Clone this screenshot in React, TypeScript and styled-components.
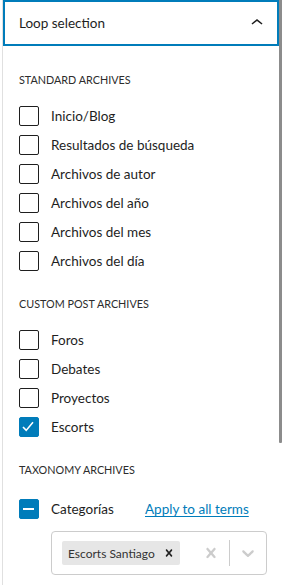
import React from "react";
import styled, { createGlobalStyle } from "styled-components";

const GlobalStyle = createGlobalStyle`
  html, body {
    margin: 0;
    padding: 0;
    background: #fff;
  }
  body {
    font-family: Lato, "Liberation Sans", sans-serif;
    color: #1e1e1e;
  }
`;

const Panel = styled.div`
  position: relative;
  margin-left: 2px;
  width: 277px;
  min-height: 585px;
  border-left: 1px solid #e0e0e0;
  box-sizing: border-box;
`;

const ScrollThumb = styled.div`
  position: absolute;
  top: 0;
  right: -3px;
  width: 3px;
  height: 443px;
  background: #8c8c8c;
  border-radius: 0 0 1px 1px;
`;

const Header = styled.button`
  display: flex;
  align-items: center;
  justify-content: space-between;
  width: 100%;
  height: 46px;
  padding: 0 10px 0 16px;
  box-sizing: border-box;
  background: #fff;
  border: none;
  box-shadow: inset 0 0 0 2px #007cba;
  font-family: inherit;
  font-size: 13.5px;
  color: #1e1e1e;
  cursor: pointer;
`;

const Body = styled.div`
  padding: 26px 16px 0 16px;
`;

const SectionTitle = styled.div<{ $gap?: number }>`
  font-size: 10.8px;
  line-height: 16px;
  text-transform: uppercase;
  color: #2c2c2c;
  margin-bottom: ${({ $gap }) => $gap ?? 18}px;
`;

const List = styled.div`
  display: flex;
  flex-direction: column;
  gap: 9px;
  margin-bottom: 25px;
`;

const Row = styled.label`
  display: flex;
  align-items: center;
  gap: 12px;
  height: 20px;
  font-size: 13.5px;
  cursor: pointer;
`;

const Box = styled.span<{ $on?: boolean }>`
  display: flex;
  align-items: center;
  justify-content: center;
  flex: none;
  width: 20px;
  height: 20px;
  box-sizing: border-box;
  border-radius: 2px;
  border: 1px solid ${({ $on }) => ($on ? "#007cba" : "#1e1e1e")};
  background: ${({ $on }) => ($on ? "#007cba" : "#fff")};
`;

const Label = styled.span<{ $width?: number }>`
  line-height: 20px;
  ${({ $width }) => ($width ? `width: ${$width}px;` : "")}
`;

const TermLink = styled.a`
  font-size: 13.5px;
  color: #007cba;
  text-decoration: underline;
  text-underline-offset: 2px;
`;

const Control = styled.div`
  display: flex;
  align-items: stretch;
  margin: 12px 0 0 32px;
  width: 216px;
  height: 44px;
  box-sizing: border-box;
  border: 1px solid #cccccc;
  border-radius: 4px;
  background: #fff;
`;

const ValueArea = styled.div`
  flex: 1;
  display: flex;
  align-items: center;
  padding: 0 0 0 10px;
`;

const Tag = styled.div`
  display: flex;
  align-items: center;
  height: 24px;
  background: #e6e6e6;
  border-radius: 2px;
`;

const TagText = styled.span`
  font-size: 12px;
  padding: 0 3px 0 6px;
  color: #333;
`;

const TagRemove = styled.span`
  display: flex;
  align-items: center;
  padding: 0 4px;
  height: 100%;
  color: #222;
`;

const Indicator = styled.span`
  display: flex;
  align-items: center;
  padding: 0 8px;
  color: #cccccc;
`;

const Separator = styled.span`
  width: 1px;
  margin: 8px 0;
  background: #cccccc;
`;

const crossPath =
  "M14.348 14.849c-0.469 0.469-1.229 0.469-1.697 0l-2.651-3.030-2.651 3.029c-0.469 0.469-1.229 0.469-1.697 0-0.469-0.469-0.469-1.229 0-1.697l2.758-3.15-2.759-3.152c-0.469-0.469-0.469-1.228 0-1.697s1.228-0.469 1.697 0l2.652 3.031 2.651-3.031c0.469-0.469 1.228-0.469 1.697 0s0.469 1.229 0 1.697l-2.758 3.152 2.758 3.15c0.469 0.469 0.469 1.229 0 1.698z";
const chevronDownPath =
  "M4.516 7.548c0.436-0.446 1.043-0.481 1.576 0l3.908 3.747 3.908-3.747c0.533-0.481 1.141-0.446 1.574 0 0.436 0.445 0.408 1.197 0 1.615-0.406 0.418-4.695 4.502-4.695 4.502-0.217 0.223-0.502 0.335-0.787 0.335s-0.57-0.112-0.789-0.335c0 0-4.287-4.084-4.695-4.502s-0.436-1.17 0-1.615z";

const Cross = ({ size }: { size: number }) => (
  <svg width={size} height={size} viewBox="0 0 20 20" fill="currentColor">
    <path d={crossPath} />
  </svg>
);

const Checkbox = ({ state }: { state?: "checked" | "mixed" }) => (
  <Box $on={!!state}>
    {state === "checked" && (
      <svg width="20" height="20" viewBox="0 0 20 20" style={{ margin: -1 }}>
        <polyline points="4,10 7.2,13.4 14,5.2" fill="none" stroke="#fff" strokeWidth="1.6" />
      </svg>
    )}
    {state === "mixed" && (
      <svg width="20" height="20" viewBox="0 0 20 20" style={{ margin: -1 }}>
        <rect x="4" y="9" width="11" height="2" fill="#fff" />
      </svg>
    )}
  </Box>
);

const standard = [
  "Inicio/Blog",
  "Resultados de búsqueda",
  "Archivos de autor",
  "Archivos del año",
  "Archivos del mes",
  "Archivos del día",
];

const custom: { name: string; checked?: boolean }[] = [
  { name: "Foros" },
  { name: "Debates" },
  { name: "Proyectos" },
  { name: "Escorts", checked: true },
];

const App = () => {
  return (
    <>
      <GlobalStyle />
      <Panel>
        <ScrollThumb />
        <Header>
          <span>Loop selection</span>
          <svg width="24" height="24" viewBox="0 0 24 24" fill="#1e1e1e">
            <path d="M6.5 12.4L12 8l5.5 4.4-.9 1.2L12 10l-4.6 3.6-.9-1.2z" />
          </svg>
        </Header>
        <Body>
          <SectionTitle>Standard Archives</SectionTitle>
          <List>
            {standard.map((name) => (
              <Row key={name}>
                <Checkbox />
                <Label>{name}</Label>
              </Row>
            ))}
          </List>

          <SectionTitle>Custom Post Archives</SectionTitle>
          <List>
            {custom.map((item) => (
              <Row key={item.name}>
                <Checkbox state={item.checked ? "checked" : undefined} />
                <Label>{item.name}</Label>
              </Row>
            ))}
          </List>

          <SectionTitle $gap={21}>Taxonomy Archives</SectionTitle>
          <Row>
            <Checkbox state="mixed" />
            <Label $width={82}>Categorías</Label>
            <TermLink href="#">Apply to all terms</TermLink>
          </Row>
          <Control>
            <ValueArea>
              <Tag>
                <TagText>Escorts Santiago</TagText>
                <TagRemove>
                  <Cross size={14} />
                </TagRemove>
              </Tag>
            </ValueArea>
            <Indicator>
              <Cross size={20} />
            </Indicator>
            <Separator />
            <Indicator>
              <svg width="20" height="20" viewBox="0 0 20 20" fill="currentColor">
                <path d={chevronDownPath} />
              </svg>
            </Indicator>
          </Control>
        </Body>
      </Panel>
    </>
  );
};

export default App;
